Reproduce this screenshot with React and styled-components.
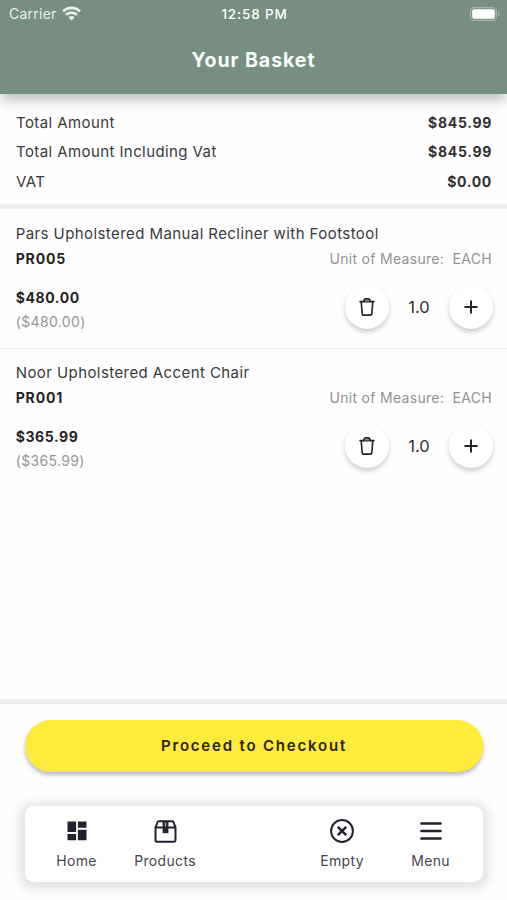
import React from "react";
import styled, { createGlobalStyle } from "styled-components";

const GlobalStyle = createGlobalStyle`
  * { box-sizing: border-box; }
  body { margin: 0; background: #fefefe; font-family: Inter, "Liberation Sans", sans-serif; color: #3a3a3a; }
  button { font: inherit; color: inherit; border: 0; padding: 0; }
`;

const Screen = styled.div`
  display: flex;
  flex-direction: column;
  width: 507px;
  height: 900px;
  overflow: hidden;
`;

const Header = styled.header`
  position: relative;
  height: 94px;
  flex: none;
  background: #778f80;
  color: #fbfffc;
  box-shadow: 0 9px 11px -2px rgba(60, 50, 50, 0.29);
`;

const StatusBar = styled.div`
  display: grid;
  grid-template-columns: 1fr auto 1fr;
  align-items: center;
  height: 27px;
  padding: 0 7px 0 9px;
`;

const Carrier = styled.div`
  display: flex;
  align-items: center;
  gap: 5px;
  font-size: 14px;
  line-height: 28px;
  letter-spacing: 0.24px;
  color: #e9f1eb;
`;

const Clock = styled.div`
  font-size: 13.5px;
  font-weight: 500;
  letter-spacing: 0.85px;
`;

const BatterySlot = styled.div`
  display: flex;
  justify-content: flex-end;
`;

const Title = styled.h1`
  margin: 0;
  height: 66px;
  line-height: 66px;
  font-size: 19.5px;
  font-weight: 700;
  letter-spacing: 0.95px;
  text-align: center;
`;

const Summary = styled.section`
  height: 115px;
  flex: none;
  padding: 13.5px 15px 0 16px;
  border-bottom: 5px solid #eeeeee;
`;

const SummaryRow = styled.div`
  display: flex;
  justify-content: space-between;
  align-items: center;
  height: 29.5px;
  font-size: 15px;
  letter-spacing: 0.41px;
`;

const Amount = styled.span`
  font-size: 14px;
  font-weight: 700;
  letter-spacing: 0.7px;
  color: #303030;
`;

const Basket = styled.main`
  flex: 1;
  padding-top: 0.6px;
`;

const Item = styled.article`
  height: 139px;
  padding: 12.4px 14px 0 15.7px;
  border-bottom: 1px solid ${(p) => (p.$last ? "transparent" : "#f1f1f1")};
`;

const ItemName = styled.div`
  height: 24px;
  line-height: 24px;
  font-size: 15px;
  letter-spacing: 0.42px;
  white-space: nowrap;
`;

const ItemMeta = styled.div`
  display: flex;
  justify-content: space-between;
  height: 26px;
  line-height: 25px;
  padding-right: 1px;
`;

const Code = styled.span`
  font-size: 14px;
  font-weight: 700;
  letter-spacing: 0.85px;
  color: #242424;
`;

const Unit = styled.span`
  font-size: 14px;
  letter-spacing: 0.3px;
  color: #919191;
  white-space: pre;
`;

const ItemBottom = styled.div`
  display: flex;
  justify-content: space-between;
  padding-top: 14px;
`;

const Prices = styled.div`
  display: flex;
  flex-direction: column;
`;

const Price = styled.span`
  height: 24px;
  line-height: 24px;
  font-size: 14px;
  font-weight: 700;
  letter-spacing: 0.6px;
  color: #242424;
`;

const UnitPrice = styled.span`
  height: 23px;
  line-height: 23px;
  font-size: 14px;
  letter-spacing: 0.35px;
  color: #969696;
`;

const Stepper = styled.div`
  display: flex;
  align-items: center;
  height: 44px;
  margin-top: -1px;
`;

const RoundButton = styled.button`
  display: grid;
  place-items: center;
  width: 44px;
  height: 44px;
  border-radius: 50%;
  background: #fff;
  color: #252525;
  box-shadow: 0 3px 5px rgba(0, 0, 0, 0.2);
`;

const Quantity = styled.span`
  width: 60px;
  text-align: center;
  font-size: 16.5px;
  color: #303030;
`;

const Footer = styled.footer`
  height: 201px;
  flex: none;
  border-top: 5px solid #eeeeee;
  padding: 16px 25px 0;
`;

const CheckoutButton = styled.button`
  display: block;
  width: 458px;
  height: 52px;
  padding-bottom: 2px;
  border-radius: 26px;
  background: #ffeb3b;
  color: #29240e;
  font-size: 15px;
  font-weight: 600;
  letter-spacing: 1.8px;
  box-shadow: 0 3px 4px rgba(0, 0, 0, 0.27);
`;

const Nav = styled.nav`
  display: grid;
  grid-template-columns: repeat(5, 88.5px);
  width: 458px;
  height: 76px;
  margin-top: 34px;
  padding: 10px 0 0 7.3px;
  border-radius: 9px;
  background: #fff;
  box-shadow: 0 2px 10px 6px rgba(0, 0, 0, 0.1);
`;

const NavItem = styled.a`
  display: flex;
  flex-direction: column;
  align-items: center;
  grid-column: ${(p) => p.$column};
  font-size: 14px;
  line-height: 20px;
  letter-spacing: 0.32px;
  color: #45464a;
`;

const NavIcon = styled.span`
  display: grid;
  place-items: center;
  height: 30px;
  margin-bottom: 5px;
  color: #20222d;
`;

const WifiIcon = () => (
  <svg width="19" height="16" viewBox="0 0 19 16" fill="none" stroke="currentColor" strokeWidth="2.7">
    <path d="M1 5.4a12.2 12.2 0 0 1 17 0M4 8.8a7.9 7.9 0 0 1 11 0" />
    <path d="M9.5 14.6 6.4 11.4a4.5 4.5 0 0 1 6.2 0Z" fill="currentColor" stroke="none" />
  </svg>
);

const BatteryIcon = () => (
  <svg width="30" height="14" viewBox="0 0 30 14">
    <rect x="0.6" y="0.6" width="25.8" height="12.8" rx="3.6" fill="none" stroke="#a3b4a9" strokeWidth="1.2" />
    <rect x="2.2" y="2.2" width="22.6" height="9.6" rx="2" fill="#fff" />
    <path d="M27.8 4.8q1.8.8 1.8 2.2t-1.8 2.2Z" fill="#a3b4a9" />
  </svg>
);

const TrashIcon = () => (
  <svg width="16" height="20" viewBox="0 0 16 20" fill="none" stroke="currentColor" strokeWidth="1.6" strokeLinejoin="round" strokeLinecap="round">
    <path d="M1 4.6h14M2.2 4.6l1 12.3q.1 1.2 1.3 1.2h7q1.2 0 1.3-1.2l1-12.3" />
    <path d="M4.8 4.4Q5 1.8 7 1.8h2q2 0 2.2 2.6" fill="#8b8b8b" />
  </svg>
);

const PlusIcon = () => (
  <svg width="14" height="14" viewBox="0 0 14 14" stroke="currentColor" strokeWidth="2" strokeLinecap="round">
    <path d="M7 1.2v11.6M1.2 7h11.6" />
  </svg>
);

const HomeIcon = () => (
  <svg width="20" height="20" viewBox="0 0 20 20" fill="currentColor">
    <path d="M.5.5h8.6v10.4H.5zM10.9.5h8.6v6.3h-8.6zM.5 12.9h8.6v6.4H.5zM10.9 8.8h8.6v10.5h-8.6z" />
  </svg>
);

const BoxIcon = () => (
  <svg width="23" height="23" viewBox="0 0 23 23" fill="none" stroke="currentColor" strokeWidth="2" strokeLinejoin="round">
    <path d="M1.5 7.4 3.6 2q.3-.8 1.1-.8h13.6q.8 0 1.1.8l2.1 5.4v12.9q0 1.4-1.4 1.4H2.9q-1.4 0-1.4-1.4ZM1.5 7.6h20" />
    <path d="M8.6 1.5h5.8v11.7H8.6z" fill="currentColor" stroke="none" />
    <path d="M11.5 2.6v4" stroke="#aaa" strokeWidth="1.4" />
  </svg>
);

const EmptyIcon = () => (
  <svg width="26" height="26" viewBox="0 0 26 26" fill="none" stroke="currentColor" strokeWidth="2">
    <circle cx="13" cy="13" r="10.9" />
    <path d="m8.8 8.8 8.4 8.4M17.2 8.8l-8.4 8.4" strokeWidth="2.5" />
  </svg>
);

const MenuIcon = () => (
  <svg width="22" height="20" viewBox="0 0 22 20" stroke="currentColor" strokeWidth="2.5" strokeLinecap="round">
    <path d="M1.4 2.4h19.2M1.4 10h19.2M1.4 17.6h19.2" />
  </svg>
);

const totals = [
  ["Total Amount", "$845.99"],
  ["Total Amount Including Vat", "$845.99"],
  ["VAT", "$0.00"],
];

const items = [
  { name: "Pars Upholstered Manual Recliner with Footstool", code: "PR005", price: "$480.00" },
  { name: "Noor Upholstered Accent Chair", code: "PR001", price: "$365.99" },
];

const links = [
  { label: "Home", column: 1, Icon: HomeIcon },
  { label: "Products", column: 2, Icon: BoxIcon },
  { label: "Empty", column: 4, Icon: EmptyIcon },
  { label: "Menu", column: 5, Icon: MenuIcon },
];

export default function App() {
  return (
    <Screen>
      <GlobalStyle />
      <Header>
        <StatusBar>
          <Carrier>Carrier <WifiIcon /></Carrier>
          <Clock>12:58 PM</Clock>
          <BatterySlot><BatteryIcon /></BatterySlot>
        </StatusBar>
        <Title>Your Basket</Title>
      </Header>
      <Summary>
        {totals.map(([label, value]) => (
          <SummaryRow key={label}>
            <span>{label}</span>
            <Amount>{value}</Amount>
          </SummaryRow>
        ))}
      </Summary>
      <Basket>
        {items.map((item, i) => (
          <Item key={item.code} $last={i === items.length - 1}>
            <ItemName>{item.name}</ItemName>
            <ItemMeta>
              <Code>{item.code}</Code>
              <Unit>{"Unit of Measure:  EACH"}</Unit>
            </ItemMeta>
            <ItemBottom>
              <Prices>
                <Price>{item.price}</Price>
                <UnitPrice>({item.price})</UnitPrice>
              </Prices>
              <Stepper>
                <RoundButton aria-label="Remove"><TrashIcon /></RoundButton>
                <Quantity>1.0</Quantity>
                <RoundButton aria-label="Add"><PlusIcon /></RoundButton>
              </Stepper>
            </ItemBottom>
          </Item>
        ))}
      </Basket>
      <Footer>
        <CheckoutButton>Proceed to Checkout</CheckoutButton>
        <Nav>
          {links.map(({ label, column, Icon }) => (
            <NavItem key={label} $column={column}>
              <NavIcon><Icon /></NavIcon>
              {label}
            </NavItem>
          ))}
        </Nav>
      </Footer>
    </Screen>
  );
}
